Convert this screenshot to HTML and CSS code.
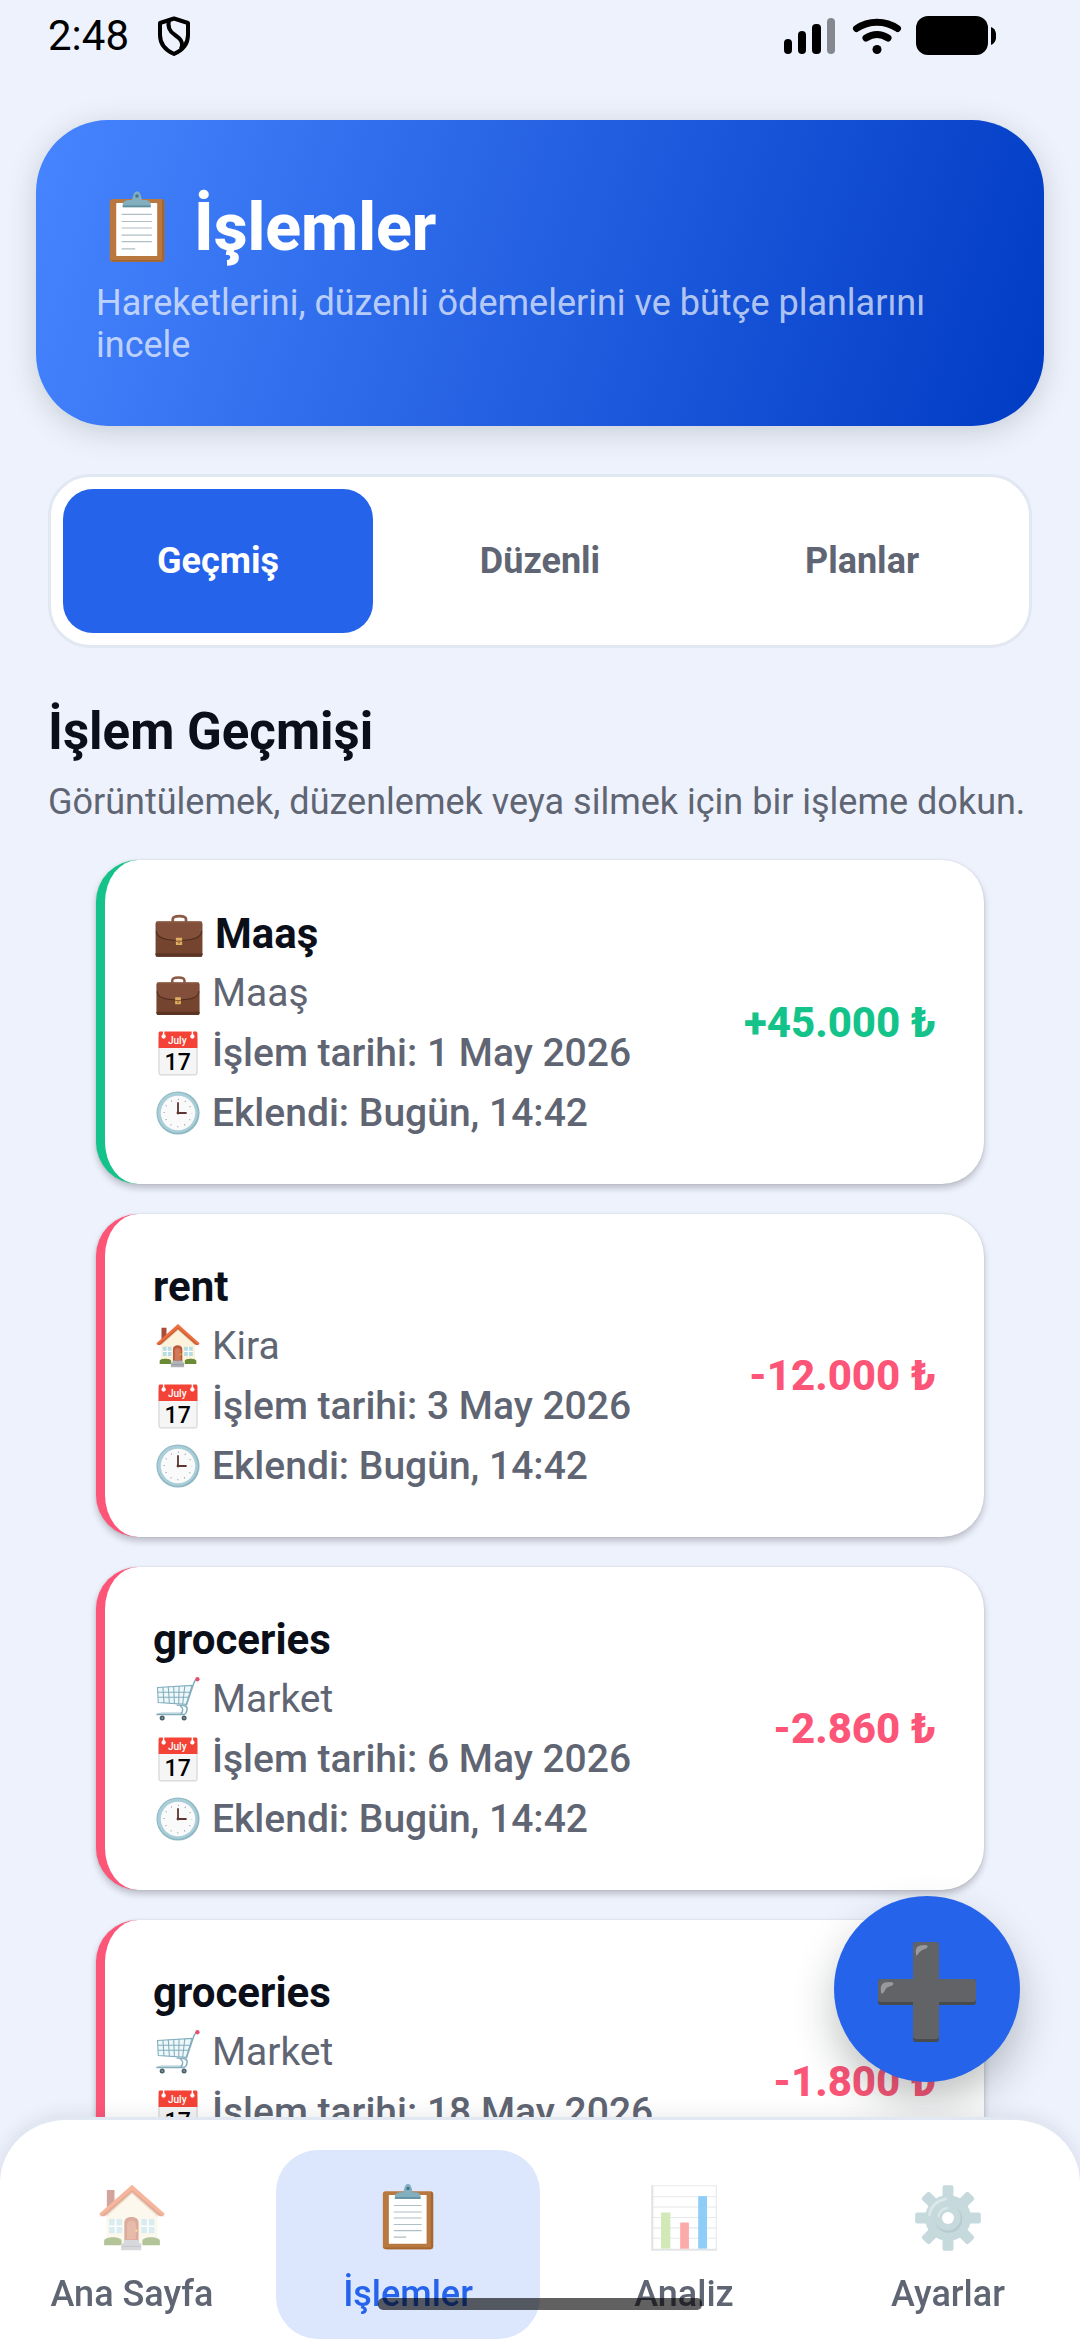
FILE: index.html
```html
<!DOCTYPE html>
<html lang="tr"><head>
<meta charset="utf-8">
<meta name="viewport" content="width=device-width, initial-scale=1">
<title>İşlemler</title>
<link rel="stylesheet" href="styles.css"></head>

<body>
<!-- icon sprite -->
<svg class="sprite" aria-hidden="true">
	<symbol id="i-clipboard" viewBox="0 0 128 128">
		<rect x="18" y="15" width="92" height="106" rx="5" fill="#b9783f"/>
		<path d="M106 16v102H20c1 2 3 3 5 3h80c3 0 5-2 5-5V20c0-2-2-4-4-4z" fill="#a5652f"/>
		<rect x="29" y="22" width="69" height="89" rx="1" fill="#fff"/>
		<path d="M38 41h51M38 53h51M38 64h51M38 76h51M38 87h51M38 99h23" stroke="#b0bec5" stroke-width="2"/>
		<path d="M53 19c5-2 3-17 11-17s6 15 11 17z" fill="#82aebd"/>
		<circle cx="64" cy="10" r="3" fill="#42768a"/>
		<path d="M40 29v-5c0-4 5-7 10-7h28c5 0 9 3 9 7v5z" fill="#82aebd"/>
		<path d="M40 26h47v3H40z" fill="#5f8f9f"/>
	</symbol>
	<symbol id="i-house" viewBox="0 0 128 128">
		<path d="M18 13h14v24L18 50z" fill="#a84c3c"/>
		<path d="M17 52l47-41 47 41v62H17z" fill="#fdf3dc"/>
		<path d="M17 55l47-42 47 42v7L64 20 17 62z" fill="#d9c9a6"/>
		<path d="M64 3L4 56l3 5 7-1 50-44 50 44 7 1 3-5z" fill="#ec6f3d"/>
		<path d="M64 13L7 61h7l50-44 50 44h7z" fill="#cf5a33"/>
		<path d="M22 66h24v26H22zM81 66h24v26H81z" fill="#b5dde3"/>
		<path d="M34 66v26M22 79h24M93 66v26M81 79h24" stroke="#fff" stroke-width="3"/>
		<path d="M50 106V72c0-13 26-13 26 0v34z" fill="#b8593f"/>
		<path d="M55 103V76c0-9 16-9 16 0v27z" fill="#d07a58"/>
		<circle cx="72" cy="87" r="2" fill="#ffca28"/>
		<path d="M13 114v-8c0-9 32-9 32 0v8zM83 114v-8c0-9 32-9 32 0v8z" fill="#6b8a36"/>
		<path d="M49 104h28v6h4v13H44v-13h5z" fill="#b0b3b8"/>
		<path d="M46 116h34" stroke="#8d9197" stroke-width="2"/>
	</symbol>
	<symbol id="i-briefcase" viewBox="0 0 128 128">
		<path d="M48 38v-9c0-11 34-11 34 0v9" fill="none" stroke="#8d5b45" stroke-width="7"/>
		<rect x="4" y="34" width="120" height="91" rx="6" fill="#74442f"/>
		<path d="M4 116h120v4c0 3-2 5-5 5H9c-3 0-5-2-5-5z" fill="#5b3423"/>
		<path d="M6 37h116v22c0 16-18 24-58 24S6 75 6 59z" fill="#82503a"/>
		<path d="M6 59c0 16 18 24 58 24s58-8 58-24" fill="none" stroke="#4e2c1e" stroke-width="3"/>
		<path d="M6 36h116" stroke="#a06b52" stroke-width="2"/>
		<rect x="56" y="76" width="16" height="19" rx="1" fill="#e0ad63"/>
		<path d="M56 85h16" stroke="#8a5a2e" stroke-width="3"/>
		<circle cx="64" cy="89" r="2" fill="#74442f"/>
	</symbol>
	<symbol id="i-clock" viewBox="0 0 128 128">
		<circle cx="64" cy="64" r="60" fill="#8fb8c4"/>
		<circle cx="63" cy="63" r="56" fill="#a9ced8"/>
		<circle cx="64" cy="64" r="48" fill="#fafafa"/>
		<circle cx="64" cy="64" r="38" fill="none" stroke="#78909c" stroke-width="4" stroke-dasharray="2 17.9" stroke-dashoffset="1"/>
		<path d="M64 34v30h24" fill="none" stroke="#5d3532" stroke-width="5" stroke-linejoin="round"/>
		<circle cx="64" cy="64" r="4" fill="#5d3532"/>
	</symbol>
	<symbol id="i-cart" viewBox="0 0 128 128">
		<g fill="none" stroke="#82aebd" stroke-width="3">
			<path d="M7 32l96-6-16 53-78-5z" fill="#eef7f9"/>
			<path d="M8 45h91M8 59h86M22 31l3 44M37 30l3 46M52 29l2 48M67 28l-1 49M83 27l-6 51"/>
			<path d="M118 9c-8 2-10 8-12 17L87 82" stroke-width="4"/>
			<path d="M60 81c22 0 32 2 29 14-1 7-4 11-9 12H4M70 83c8 4 10 14 2 22" stroke-width="4"/>
			<path d="M4 107l14-4h60" stroke-width="2"/>
		</g>
		<circle cx="118" cy="9" r="6" fill="#e5516a"/>
		<circle cx="20" cy="117" r="7" fill="#4b6068"/><circle cx="20" cy="117" r="2" fill="#b0bec5"/>
		<circle cx="81" cy="117" r="7" fill="#4b6068"/><circle cx="81" cy="117" r="2" fill="#b0bec5"/>
	</symbol>
	<symbol id="i-calendar" viewBox="0 0 128 128">
		<path d="M11 20h106v100c0 3-2 5-5 5H16c-3 0-5-2-5-5z" fill="#f5f5f5" stroke="#bdbdbd" stroke-width="2"/>
		<path d="M10 8c0-2 2-4 4-4h100c2 0 4 2 4 4v42H10z" fill="#f44336"/>
		<path d="M24 3v12M104 3v12" stroke="#fff" stroke-width="4"/>
		<circle cx="24" cy="18" r="6" fill="#fff"/><circle cx="104" cy="18" r="6" fill="#fff"/>
	</symbol>
	<symbol id="i-chart" viewBox="0 0 128 128">
		<path d="M4 4h120v120H4z" fill="#fff"/>
		<path d="M4 5h120M4 25h120M4 44h120M4 63h120M4 82h120M4 101h120M123 4v120" stroke="#cfd3d6" stroke-width="2"/>
		<path d="M6 4v118h118" fill="none" stroke="#c8cbce" stroke-width="4"/>
		<path d="M22 54h17v66H22z" fill="#a5d46f"/>
		<path d="M57 74c0-1 1-2 2-2h12c1 0 2 1 2 2v46H57z" fill="#f95858"/>
		<path d="M90 24h16v96H90z" fill="#1f9cf2"/>
	</symbol>
	<symbol id="i-gear" viewBox="0 0 128 128">
		<g fill="#8eb4bc">
			<rect x="54" y="4" width="20" height="120" rx="4"/>
			<rect x="54" y="4" width="20" height="120" rx="4" transform="rotate(45 64 64)"/>
			<rect x="54" y="4" width="20" height="120" rx="4" transform="rotate(90 64 64)"/>
			<rect x="54" y="4" width="20" height="120" rx="4" transform="rotate(135 64 64)"/>
			<circle cx="64" cy="64" r="42"/>
		</g>
		<path d="M30 58c3-16 15-26 30-29" fill="none" stroke="#b6d3d8" stroke-width="5" stroke-linecap="round"/>
		<circle cx="65" cy="66" r="25" fill="#6f97a1"/>
		<circle cx="63" cy="63" r="24" fill="#8eb4bc"/>
		<path d="M47 61c1-8 7-14 15-15" fill="none" stroke="#b6d3d8" stroke-width="4" stroke-linecap="round"/>
		<circle cx="64" cy="64" r="11" fill="#fff"/>
	</symbol>
</svg>

<div class="status">
	<span class="time">2:48</span>
	<svg class="shield" viewBox="0 0 34 40" aria-hidden="true">
		<path d="M17 2.500L31 7v12c0 8-5 15-14 19C8 34 3 27 3 19V7z" fill="none" stroke="#000" stroke-width="4" stroke-linejoin="round"/>
		<path d="M12 4c-2 8 1 12 6 15 6 4 9 8 6 14" fill="none" stroke="#000" stroke-width="4"/>
	</svg>
	<svg class="signals" viewBox="0 0 212 40" aria-hidden="true">
		<rect x="0" y="23" width="8" height="15" rx="4"/>
		<rect x="14" y="15" width="8" height="23" rx="4"/>
		<rect x="28" y="8" width="9" height="30" rx="4"/>
		<rect x="43" y="2" width="8" height="36" rx="4" fill="#85888f"/>
		<g fill="none" stroke="#000" stroke-width="7" stroke-linecap="round">
			<path d="M72.500 12.500c12-8.500 29-8.500 41 0"/>
			<path d="M82 22c7-4.500 15-4.500 22 0"/>
		</g>
		<circle cx="93" cy="33.500" r="4.500"/>
		<rect x="132" y="0" width="72" height="39" rx="12"/>
		<path d="M207 11c7 2 7 16 0 18z"/>
	</svg>
</div>

<main>
	<header class="hero">
		<h1><svg aria-hidden="true"><use href="#i-clipboard"/></svg>İşlemler</h1>
		<p>Hareketlerini, düzenli ödemelerini ve bütçe planlarını incele</p>
	</header>

	<div class="tabs">
		<button class="tab active">Geçmiş</button>
		<button class="tab">Düzenli</button>
		<button class="tab">Planlar</button>
	</div>

	<h2>İşlem Geçmişi</h2>
	<p class="hint">Görüntülemek, düzenlemek veya silmek için bir işleme dokun.</p>

	<ul class="list">
		<li class="card income">
			<div class="info">
				<h3><svg aria-hidden="true"><use href="#i-briefcase"/></svg>Maaş</h3>
				<p><svg aria-hidden="true"><use href="#i-briefcase"/></svg>Maaş</p>
				<p class="date"><svg viewBox="0 0 128 128" aria-hidden="true"><use href="#i-calendar"/><text class="cal-month" x="62" y="38" text-anchor="middle">July</text><text class="cal-day" x="63" y="112" text-anchor="middle">17</text></svg>İşlem tarihi: 1 May 2026</p>
				<p class="date"><svg aria-hidden="true"><use href="#i-clock"/></svg>Eklendi: Bugün, 14:42</p>
			</div>
			<span class="amount">+45.000 ₺</span>
		</li>
		<li class="card">
			<div class="info">
				<h3>rent</h3>
				<p><svg aria-hidden="true"><use href="#i-house"/></svg>Kira</p>
				<p class="date"><svg viewBox="0 0 128 128" aria-hidden="true"><use href="#i-calendar"/><text class="cal-month" x="62" y="38" text-anchor="middle">July</text><text class="cal-day" x="63" y="112" text-anchor="middle">17</text></svg>İşlem tarihi: 3 May 2026</p>
				<p class="date"><svg aria-hidden="true"><use href="#i-clock"/></svg>Eklendi: Bugün, 14:42</p>
			</div>
			<span class="amount">-12.000 ₺</span>
		</li>
		<li class="card">
			<div class="info">
				<h3>groceries</h3>
				<p><svg aria-hidden="true"><use href="#i-cart"/></svg>Market</p>
				<p class="date"><svg viewBox="0 0 128 128" aria-hidden="true"><use href="#i-calendar"/><text class="cal-month" x="62" y="38" text-anchor="middle">July</text><text class="cal-day" x="63" y="112" text-anchor="middle">17</text></svg>İşlem tarihi: 6 May 2026</p>
				<p class="date"><svg aria-hidden="true"><use href="#i-clock"/></svg>Eklendi: Bugün, 14:42</p>
			</div>
			<span class="amount">-2.860 ₺</span>
		</li>
		<li class="card">
			<div class="info">
				<h3>groceries</h3>
				<p><svg aria-hidden="true"><use href="#i-cart"/></svg>Market</p>
				<p class="date"><svg viewBox="0 0 128 128" aria-hidden="true"><use href="#i-calendar"/><text class="cal-month" x="62" y="38" text-anchor="middle">July</text><text class="cal-day" x="63" y="112" text-anchor="middle">17</text></svg>İşlem tarihi: 18 May 2026</p>
				<p class="date"><svg aria-hidden="true"><use href="#i-clock"/></svg>Eklendi: Bugün, 14:42</p>
			</div>
			<span class="amount">-1.800 ₺</span>
		</li>
	</ul>
</main>

<button class="fab" aria-label="Ekle">
	<svg viewBox="0 0 98 100" aria-hidden="true">
		<path d="M38 0h20c2 0 3 1 3 3v34h34c2 0 3 1 3 3v20c0 2-1 3-3 3H61v34c0 2-1 3-3 3H38c-2 0-3-1-3-3V63H3c-2 0-3-1-3-3V40c0-2 1-3 3-3h32V3c0-2 1-3 3-3z" fill="#484b4e"/>
		<path d="M38 0h20c2 0 3 1 3 3v34h34c2 0 3 1 3 3v17c0 2-1 3-3 3H61v34c0 2-1 3-3 3H38c-2 0-3-1-3-3V60H3c-2 0-3-1-3-3V40c0-2 1-3 3-3h32V3c0-2 1-3 3-3z" fill="#616366"/>
		<path d="M38 12c-1-6 1-9 9-9 4 0 3 3 0 4-4 1-5 3-7 5-1 2-2 2-2 0zM3 50c-1-7 1-10 9-10 5 0 4 3 1 4-5 1-5 3-7 6-2 2-3 2-3 0z" fill="#97999c"/>
	</svg>
</button>

<nav>
	<a href="#"><svg aria-hidden="true"><use href="#i-house"/></svg>Ana Sayfa</a>
	<a href="#" class="active"><svg aria-hidden="true"><use href="#i-clipboard"/></svg>İşlemler</a>
	<a href="#"><svg aria-hidden="true"><use href="#i-chart"/></svg>Analiz</a>
	<a href="#"><svg aria-hidden="true"><use href="#i-gear"/></svg>Ayarlar</a>
</nav>
<div class="home-bar"></div>
</body>
</html>
```
FILE: styles.css
```css
* {
	box-sizing: border-box;
	margin: 0;
	padding: 0;
}
body {
	min-height: 100vh;
	background: #eef2fd;
	color: #0b0f1a;
	font-family: Roboto, "Noto Sans", sans-serif;
	font-size: 36px;
	line-height: 42px;
}
button {
	border: 0;
	font: inherit;
	cursor: pointer;
}
.sprite {
	position: absolute;
	width: 0;
	height: 0;
}
.cal-month {
	font: 500 28px Roboto, sans-serif;
	fill: #fff;
}
.cal-day {
	font: 500 64px Roboto, sans-serif;
	fill: #000;
}

/* status bar */
.status {
	display: flex;
	align-items: center;
	height: 72px;
	padding: 0 84px 0 48px;
	color: #000;
}
.time {
	font-size: 42px;
}
.shield {
	width: 34px;
	height: 40px;
	margin-left: 28px;
}
.signals {
	width: 212px;
	height: 40px;
	margin-left: auto;
}

main {
	padding: 48px 48px 0;
}

/* header card */
.hero {
	margin: 0 -12px 48px;
	padding: 60px;
	border-radius: 72px;
	background: linear-gradient(107deg, #4785ff, #003bc4);
	box-shadow: 0 6px 30px rgba(40, 60, 50, .2);
	color: #fff;
}
.hero h1 {
	display: flex;
	align-items: center;
	gap: 19px;
	margin-bottom: 6px;
	font-size: 66px;
	font-weight: 800;
	line-height: 96px;
}
.hero h1 svg {
	width: 76px;
	height: 76px;
	margin-left: 3px;
}
.hero p {
	color: rgba(255, 255, 255, .68);
}

/* tabs */
.tabs {
	display: flex;
	gap: 12px;
	margin-bottom: 54px;
	padding: 12px;
	border: 3px solid #e2e8f2;
	border-radius: 42px;
	background: #fff;
}
.tab {
	flex: 1;
	height: 144px;
	border-radius: 30px;
	background: none;
	color: #5f6572;
	font-weight: 700;
}
.tab.active {
	background: #2563eb;
	color: #fff;
}

h2 {
	margin-bottom: 19px;
	font-size: 51px;
	line-height: 60px;
}
.hint {
	margin-bottom: 37px;
	color: #5f6572;
}

/* transactions */
.list {
	padding: 0 48px;
	list-style: none;
}
.card {
	display: flex;
	align-items: center;
	justify-content: space-between;
	margin-bottom: 30px;
	padding: 48px;
	border-left: 9px solid #fd5578;
	border-radius: 42px;
	background: #fff;
	box-shadow: 0 4px 7px rgba(0, 0, 0, .22), 0 0 2px rgba(0, 0, 0, .12);
}
.card.income {
	border-color: #14c38a;
}
.card h3 {
	display: flex;
	align-items: center;
	gap: 11px;
	margin-bottom: 12px;
	font-size: 42px;
	line-height: 49px;
}
.card h3 svg {
	width: 50px;
	height: 50px;
	margin-left: 1px;
}
.card p {
	display: flex;
	align-items: center;
	gap: 11px;
	color: #5f6572;
	font-size: 39px;
	line-height: 46px;
}
.card p svg {
	width: 46px;
	height: 46px;
	margin-left: 2px;
}
.card .date {
	margin-top: 14px;
	font-weight: 500;
}
.amount {
	color: #fd5578;
	font-size: 42px;
	font-weight: 800;
	line-height: 49px;
}
.income .amount {
	color: #14c38a;
}

/* add button */
.fab {
	position: fixed;
	right: 60px;
	bottom: 258px;
	display: flex;
	align-items: center;
	justify-content: center;
	width: 186px;
	height: 186px;
	padding-top: 6px;
	border-radius: 50%;
	background: #2563eb;
	box-shadow: 0 20px 42px rgba(30, 40, 40, .28);
}
.fab svg {
	width: 98px;
	height: 100px;
}

/* bottom navigation */
nav {
	position: fixed;
	left: 0;
	right: 0;
	bottom: 0;
	display: flex;
	gap: 12px;
	padding: 30px 12px 1px 0;
	border-top: 3px solid #e2e8f2;
	border-radius: 66px 66px 0 0;
	background: #fff;
	box-shadow: 0 0 20px rgba(30, 40, 60, .12);
}
nav a {
	display: flex;
	flex: 11;
	flex-direction: column;
	align-items: center;
	gap: 20px;
	padding: 33px 0 24px;
	border-radius: 42px;
	color: #5f6572;
	font-weight: 500;
	text-decoration: none;
}
nav a:last-child {
	flex: 10;
}
nav svg {
	width: 70px;
	height: 70px;
	opacity: .5;
}
nav .active {
	background: #dce7fe;
	color: #2563eb;
}
nav .active svg {
	opacity: 1;
}

.home-bar {
	position: fixed;
	left: 35%;
	right: 35%;
	bottom: 30px;
	height: 12px;
	border-radius: 5px;
	background: rgba(0, 0, 0, .62);
}
```
